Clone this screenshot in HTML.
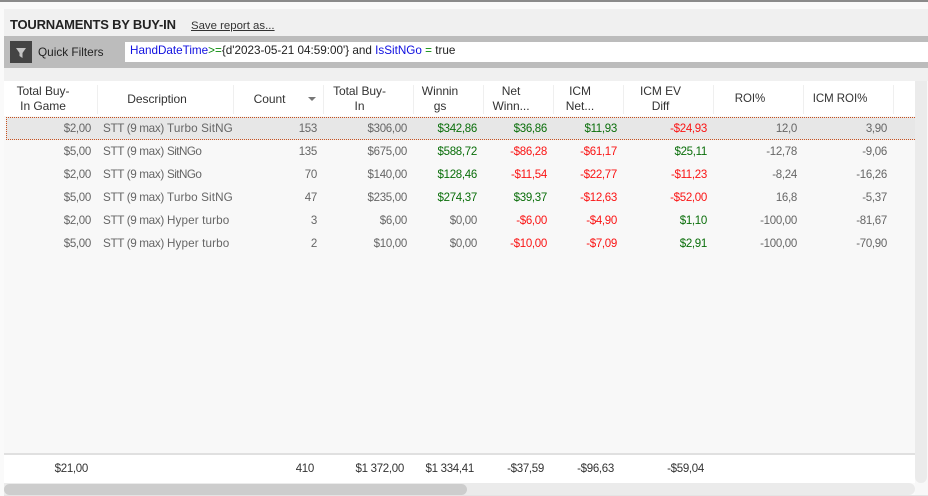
<!DOCTYPE html>
<html><head><meta charset="utf-8">
<style>
html,body{margin:0;padding:0;width:928px;height:496px;overflow:hidden;background:#fafafa}
body{position:relative;font-family:"Liberation Sans",sans-serif;font-size:12px;color:#222}
div{position:absolute;box-sizing:border-box}
.t{white-space:nowrap;line-height:16px;height:16px}
.r{text-align:right;color:#666;font-size:11.5px;letter-spacing:-.3px;line-height:18px;height:18px}
.g{color:#0a6e0a}.e{color:#fa1414}
.h{color:#333;text-align:center;line-height:15px;font-size:12px;letter-spacing:-.05px}
.s{width:1px;top:85px;height:29px;background:#efefef}
.f{color:#333;text-align:right;font-size:11.5px;letter-spacing:-.3px;line-height:18px;height:18px}
.d{left:103px;width:129px;overflow:hidden;color:#666;font-size:11.7px;line-height:18px;height:18px}
.d b{font-weight:normal;display:inline-block;width:64px;letter-spacing:-.35px}
.d i{font-style:normal;letter-spacing:-.55px}
.d u{text-decoration:none;letter-spacing:.12px}
</style></head><body>
<div style="left:0;top:0;width:928px;height:2px;background:#8a8a8a"></div>
<div style="left:0;top:2px;width:928px;height:7px;background:#f9f9f9"></div>
<div style="left:4px;top:9px;width:924px;height:72px;background:#f0f0f0"></div>
<div class="t" style="left:10px;top:17px;font-weight:bold;font-size:13px;color:#222;letter-spacing:-.2px">TOURNAMENTS BY BUY-IN</div>
<div class="t" style="left:191px;top:18px;font-size:11.4px;text-decoration:underline;color:#333">Save report as...</div>
<div style="left:4px;top:36px;width:924px;height:32px;background:#bcbcbc"></div>
<div style="left:10px;top:41px;width:22px;height:22px;background:#444"></div>
<svg style="position:absolute;left:10px;top:41px" width="22" height="22"><path d="M6 7H16L12.5 12V17L9.5 15V12Z" fill="#c4c4c4"/></svg>
<div class="t" style="left:38px;top:44px;color:#222;font-size:11.8px">Quick Filters</div>
<div style="left:125px;top:42px;width:803px;height:20px;background:#fff"></div>
<div class="t" style="left:130px;top:43px;font-size:11.7px;color:#222"><span style="color:#1010e0">HandDateTime</span><span style="color:#0a8a0a">&gt;=</span>{d'2023-05-21 04:59:00'} and <span style="color:#1010e0">IsSitNGo</span> <span style="color:#0a8a0a">=</span> true</div>

<div style="left:4px;top:81px;width:911px;height:372px;background:#f8f8f8"></div>
<div style="left:4px;top:81px;width:911px;height:35px;background:#fff"></div>
<div class="s" style="left:97px"></div><div class="s" style="left:233px"></div><div class="s" style="left:323px"></div><div class="s" style="left:413px"></div><div class="s" style="left:483px"></div><div class="s" style="left:553px"></div><div class="s" style="left:623px"></div><div class="s" style="left:713px"></div><div class="s" style="left:803px"></div><div class="s" style="left:893px"></div>

<div class="h" style="left:3px;top:84px;width:80px">Total Buy-<br>In Game</div>
<div class="h" style="left:97px;top:92px;width:120px">Description</div>
<div class="h" style="left:233px;top:92px;width:73px">Count</div>
<svg style="position:absolute;left:307px;top:96px" width="10" height="6"><path d="M1 1H9L5 5Z" fill="#777"/></svg>
<div class="h" style="left:323px;top:84px;width:73px">Total Buy-<br>In</div>
<div class="h" style="left:413px;top:84px;width:54px">Winnin<br>gs</div>
<div class="h" style="left:483px;top:84px;width:56px">Net<br>Winn...</div>
<div class="h" style="left:553px;top:84px;width:54px">ICM<br>Net...</div>
<div class="h" style="left:623px;top:84px;width:75px">ICM EV<br>Diff</div>
<div class="h" style="left:713px;top:92px;width:74px;font-size:11.5px">ROI%</div>
<div class="h" style="left:803px;top:92px;width:74px;font-size:11.5px">ICM ROI%</div>

<div style="left:6px;top:117px;width:909px;height:23px;background:#e7e7e7"></div>
<div style="left:6px;top:117px;width:909px;height:1px;background:repeating-linear-gradient(90deg,#c8501e 0 1px,transparent 1px 2px)"></div>
<div style="left:6px;top:139px;width:909px;height:1px;background:repeating-linear-gradient(90deg,#c8501e 0 1px,transparent 1px 2px)"></div>
<div style="left:6px;top:117px;width:1px;height:23px;background:repeating-linear-gradient(0deg,#c8501e 0 1px,transparent 1px 2px)"></div>

<!-- rows -->
<div class="t r" style="left:31px;width:60px;top:120px">$2,00</div><div class="t d" style="top:120px"><b>STT (9 max)</b><u>Turbo SitNGo</u></div><div class="t r" style="left:257px;width:60px;top:120px">153</div><div class="t r" style="left:337px;width:70px;top:120px">$306,00</div><div class="t r g" style="left:417px;width:60px;top:120px">$342,86</div><div class="t r g" style="left:487px;width:60px;top:120px">$36,86</div><div class="t r g" style="left:557px;width:60px;top:120px">$11,93</div><div class="t r e" style="left:627px;width:80px;top:120px">-$24,93</div><div class="t r" style="left:717px;width:80px;top:120px">12,0</div><div class="t r" style="left:807px;width:80px;top:120px">3,90</div>

<div class="t r" style="left:31px;width:60px;top:143px">$5,00</div><div class="t d" style="top:143px"><b>STT (9 max)</b><i>SitNGo</i></div><div class="t r" style="left:257px;width:60px;top:143px">135</div><div class="t r" style="left:337px;width:70px;top:143px">$675,00</div><div class="t r g" style="left:417px;width:60px;top:143px">$588,72</div><div class="t r e" style="left:487px;width:60px;top:143px">-$86,28</div><div class="t r e" style="left:557px;width:60px;top:143px">-$61,17</div><div class="t r g" style="left:627px;width:80px;top:143px">$25,11</div><div class="t r" style="left:717px;width:80px;top:143px">-12,78</div><div class="t r" style="left:807px;width:80px;top:143px">-9,06</div>

<div class="t r" style="left:31px;width:60px;top:166px">$2,00</div><div class="t d" style="top:166px"><b>STT (9 max)</b><i>SitNGo</i></div><div class="t r" style="left:257px;width:60px;top:166px">70</div><div class="t r" style="left:337px;width:70px;top:166px">$140,00</div><div class="t r g" style="left:417px;width:60px;top:166px">$128,46</div><div class="t r e" style="left:487px;width:60px;top:166px">-$11,54</div><div class="t r e" style="left:557px;width:60px;top:166px">-$22,77</div><div class="t r e" style="left:627px;width:80px;top:166px">-$11,23</div><div class="t r" style="left:717px;width:80px;top:166px">-8,24</div><div class="t r" style="left:807px;width:80px;top:166px">-16,26</div>

<div class="t r" style="left:31px;width:60px;top:189px">$5,00</div><div class="t d" style="top:189px"><b>STT (9 max)</b><u>Turbo SitNGo</u></div><div class="t r" style="left:257px;width:60px;top:189px">47</div><div class="t r" style="left:337px;width:70px;top:189px">$235,00</div><div class="t r g" style="left:417px;width:60px;top:189px">$274,37</div><div class="t r g" style="left:487px;width:60px;top:189px">$39,37</div><div class="t r e" style="left:557px;width:60px;top:189px">-$12,63</div><div class="t r e" style="left:627px;width:80px;top:189px">-$52,00</div><div class="t r" style="left:717px;width:80px;top:189px">16,8</div><div class="t r" style="left:807px;width:80px;top:189px">-5,37</div>

<div class="t r" style="left:31px;width:60px;top:212px">$2,00</div><div class="t d" style="top:212px"><b>STT (9 max)</b><u>Hyper turbo</u></div><div class="t r" style="left:257px;width:60px;top:212px">3</div><div class="t r" style="left:337px;width:70px;top:212px">$6,00</div><div class="t r" style="left:417px;width:60px;top:212px">$0,00</div><div class="t r e" style="left:487px;width:60px;top:212px">-$6,00</div><div class="t r e" style="left:557px;width:60px;top:212px">-$4,90</div><div class="t r g" style="left:627px;width:80px;top:212px">$1,10</div><div class="t r" style="left:717px;width:80px;top:212px">-100,00</div><div class="t r" style="left:807px;width:80px;top:212px">-81,67</div>

<div class="t r" style="left:31px;width:60px;top:235px">$5,00</div><div class="t d" style="top:235px"><b>STT (9 max)</b><u>Hyper turbo</u></div><div class="t r" style="left:257px;width:60px;top:235px">2</div><div class="t r" style="left:337px;width:70px;top:235px">$10,00</div><div class="t r" style="left:417px;width:60px;top:235px">$0,00</div><div class="t r e" style="left:487px;width:60px;top:235px">-$10,00</div><div class="t r e" style="left:557px;width:60px;top:235px">-$7,09</div><div class="t r g" style="left:627px;width:80px;top:235px">$2,91</div><div class="t r" style="left:717px;width:80px;top:235px">-100,00</div><div class="t r" style="left:807px;width:80px;top:235px">-70,90</div>

<!-- footer -->
<div style="left:4px;top:453px;width:911px;height:2px;background:#e0e0e0"></div>
<div style="left:4px;top:455px;width:911px;height:28px;background:#fff"></div>
<div class="t f" style="left:28px;width:60px;top:460px">$21,00</div>
<div class="t f" style="left:254px;width:60px;top:460px">410</div>
<div class="t f" style="left:324px;width:80px;top:460px">$1 372,00</div>
<div class="t f" style="left:394px;width:80px;top:460px">$1 334,41</div>
<div class="t f" style="left:464px;width:80px;top:460px">-$37,59</div>
<div class="t f" style="left:534px;width:80px;top:460px">-$96,63</div>
<div class="t f" style="left:624px;width:80px;top:460px">-$59,04</div>

<!-- scrollbars -->
<div style="left:915px;top:81px;width:13px;height:415px;background:#f8f8f8"></div>
<div style="left:915px;top:81px;width:12px;height:402px;background:#ebebeb;border-radius:0 0 6px 6px"></div>
<div style="left:4px;top:483px;width:911px;height:12px;background:#ebebeb;border-radius:0 6px 6px 0"></div>
<div style="left:4px;top:484px;width:463px;height:11px;background:#cdcdcd;border-radius:6px"></div>
<div style="left:4px;top:495px;width:924px;height:1px;background:#e4e4e4"></div>
</body></html>
